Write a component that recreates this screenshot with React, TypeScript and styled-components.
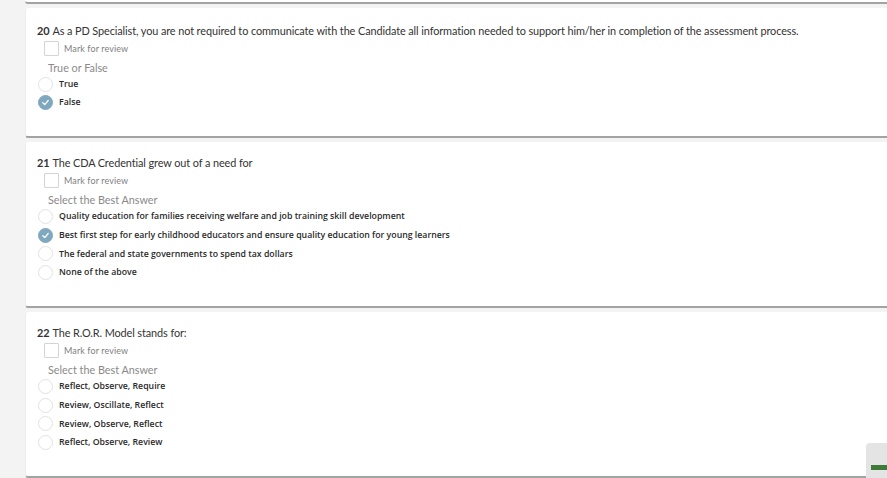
import React from "react";
import styled, { createGlobalStyle } from "styled-components";

const Global = createGlobalStyle`
  html, body { margin: 0; padding: 0; background: #f3f3f3; overflow: hidden; }
  body { font-family: Lato, "Open Sans", sans-serif; }
`;

const Page = styled.div`
  position: relative;
  width: 887px;
  height: 478px;
  overflow: hidden;
  padding-left: 25px;
  box-sizing: border-box;
`;

const Column = styled.div`
  width: 900px;
  display: flex;
  flex-direction: column;
  gap: 4px;
`;

const PrevCardEnd = styled.div`
  height: 2px;
  background: #fff;
  border-bottom: 2px solid #a3a3a3;
  border-radius: 0 0 0 3px;
`;

const Card = styled.div<{ $h: number }>`
  height: ${(p) => p.$h}px;
  box-sizing: border-box;
  background: #fff;
  border-bottom: 2px solid #a3a3a3;
  border-left: 1px solid #ececec;
  border-radius: 3px;
  padding: ${(p) => (p.$h > 140 ? 14 : 16)}px 0 0 11px;
`;

const Title = styled.div`
  font-family: Lato, sans-serif;
  font-size: 10.9px;
  color: #333;
  line-height: 14px;
  letter-spacing: -0.1px;
  white-space: nowrap;
`;

const Num = styled.span`
  font-weight: 700;
  margin-right: 3px;
`;

const Review = styled.label`
  display: flex;
  align-items: center;
  gap: 5px;
  margin: 2px 0 0 7px;
  height: 16px;
`;

const Box = styled.span`
  width: 15px;
  height: 15px;
  border: 1px solid #d4d4d4;
  border-radius: 1px;
  box-sizing: border-box;
  display: inline-block;
`;

const ReviewText = styled.span`
  font-family: Lato, sans-serif;
  font-size: 9px;
  color: #808080;
  letter-spacing: 0.1px;
`;

const Prompt = styled.div`
  font-family: Lato, sans-serif;
  font-size: 10.8px;
  color: #8a8a8a;
  margin: 6px 0 0 11px;
  line-height: 12px;
`;

const Options = styled.div`
  display: flex;
  flex-direction: column;
  margin-top: 1px;
`;

const Option = styled.div<{ $gap: number }>`
  display: flex;
  align-items: center;
  height: ${(p) => p.$gap}px;
  gap: 6px;
  margin-left: 1px;
`;

const Radio = styled.span<{ $on?: boolean }>`
  width: 15px;
  height: 15px;
  border-radius: 50%;
  box-sizing: border-box;
  border: 1px solid ${(p) => (p.$on ? "#7fa8be" : "#e2e2e2")};
  background: ${(p) => (p.$on ? "#7fa8be" : "#fff")};
  display: inline-flex;
  align-items: center;
  justify-content: center;
  flex: none;
`;

const OptText = styled.span`
  font-family: "Open Sans", sans-serif;
  font-weight: 600;
  font-size: 8.75px;
  color: #2a2a2a;
  white-space: nowrap;
`;

const Widget = styled.div`
  position: absolute;
  left: 866px;
  top: 443px;
  width: 30px;
  height: 40px;
  background: #e4e4e4;
  border-radius: 4px 0 0 0;
`;

const GreenBar = styled.div`
  position: absolute;
  left: 5px;
  top: 22px;
  width: 30px;
  height: 5px;
  background: #3f7a3a;
`;

const Check = () => (
  <svg width="9" height="9" viewBox="0 0 10 10">
    <path d="M2 5.2 L4.2 7.3 L8 2.8" fill="none" stroke="#fff" strokeWidth="1.4" strokeLinecap="round" strokeLinejoin="round" />
  </svg>
);

type Q = {
  n: number;
  text: string;
  prompt: string;
  options: string[];
  selected: number;
  h: number;
  gap: number;
};

const questions: Q[] = [
  {
    n: 20,
    text: "As a PD Specialist, you are not required to communicate with the Candidate all information needed to support him/her in completion of the assessment process.",
    prompt: "True or False",
    options: ["True", "False"],
    selected: 1,
    h: 130,
    gap: 18,
  },
  {
    n: 21,
    text: "The CDA Credential grew out of a need for",
    prompt: "Select the Best Answer",
    options: [
      "Quality education for families receiving welfare and job training skill development",
      "Best first step for early childhood educators and ensure quality education for young learners",
      "The federal and state governments to spend tax dollars",
      "None of the above",
    ],
    selected: 1,
    h: 166,
    gap: 18.7,
  },
  {
    n: 22,
    text: "The R.O.R. Model stands for:",
    prompt: "Select the Best Answer",
    options: [
      "Reflect, Observe, Require",
      "Review, Oscillate, Reflect",
      "Review, Observe, Reflect",
      "Reflect, Observe, Review",
    ],
    selected: -1,
    h: 166,
    gap: 18.7,
  },
];

export default function App() {
  return (
    <Page>
      <Global />
      <Column>
        <PrevCardEnd />
        {questions.map((q) => (
          <Card key={q.n} $h={q.h}>
            <Title>
              <Num>{q.n}</Num>
              {q.text}
            </Title>
            <Review>
              <Box />
              <ReviewText>Mark for review</ReviewText>
            </Review>
            <Prompt>{q.prompt}</Prompt>
            <Options>
              {q.options.map((o, i) => (
                <Option key={o} $gap={q.gap}>
                  <Radio $on={i === q.selected}>{i === q.selected && <Check />}</Radio>
                  <OptText>{o}</OptText>
                </Option>
              ))}
            </Options>
          </Card>
        ))}
      </Column>
      <Widget>
        <GreenBar />
      </Widget>
    </Page>
  );
}
